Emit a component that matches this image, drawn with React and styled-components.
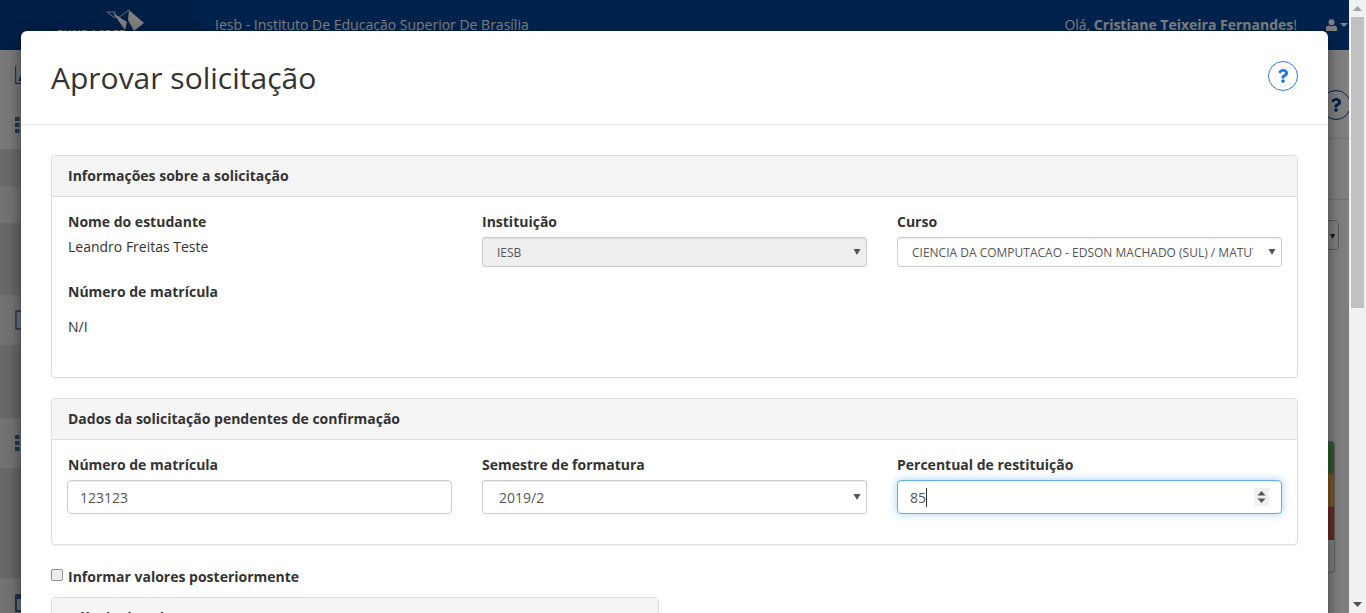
import React from "react"
import styled, { createGlobalStyle } from "styled-components"
import { FaQuestion } from "react-icons/fa"

const GlobalStyle = createGlobalStyle`
    html, body {
        margin: 0;
        height: 613px;
        overflow: hidden;
        background: #fff;
    }
    body, input, select {
        font-family: "Open Sans", "Liberation Sans", sans-serif;
        font-size: 14px;
        color: #333;
    }
    * {
        box-sizing: border-box;
    }
`

const Viewport = styled.div`
    display: flex;
    height: 613px;
    overflow: hidden;
`

const Page = styled.div`
    position: relative;
    flex: 1;
    overflow: hidden;
`

/* the app behind the dialog */
const Navbar = styled.header`
    display: flex;
    align-items: center;
    height: 50px;
    background: #00469c;
    color: #fff;
`

const Brand = styled.div`
    position: relative;
    width: 200px;
    height: 50px;
    background: #003f8c;
`

const BrandName = styled.span`
    position: absolute;
    left: 57px;
    top: 26px;
    font-size: 11px;
    font-weight: 700;
    letter-spacing: 0.3px;
`

const BrandMark = styled.svg`
    position: absolute;
    left: 106px;
    top: 9px;
`

const SiteName = styled.span`
    flex: 1;
    padding-left: 15px;
    padding-bottom: 1px;
`

const Greeting = styled.span`
    margin-right: 29px;
    padding-bottom: 1px;
`

const UserMenu = styled.span`
    display: flex;
    align-items: center;
    gap: 3px;
    width: 23px;
    flex: none;
`

const Shell = styled.div`
    display: flex;
    height: 563px;
`

const Sidebar = styled.nav`
    display: flex;
    flex-direction: column;
    width: 200px;
`

const SideItem = styled.div`
    display: flex;
    align-items: center;
    flex: none;
    height: ${props => props.$height}px;
    padding-left: 15px;
    color: #3a6ea5;
    background: ${props => props.$tone};
`

const Content = styled.main`
    flex: 1;
    display: flex;
    flex-direction: column;
    background: #fff;
`

const TitleBar = styled.div`
    display: flex;
    justify-content: flex-end;
    height: 89px;
    padding-top: 40px;
    border-bottom: 1px solid #e3e3e3;
`

const BackHelp = styled.span`
    display: flex;
    align-items: center;
    justify-content: center;
    width: 30px;
    height: 30px;
    margin-right: -2px;
    border: 1px solid #00469c;
    border-radius: 50%;
    color: #00469c;
`

const FilterBar = styled.div`
    height: 61px;
    border-bottom: 1px solid #e3e3e3;
`

const BackSelect = styled.div`
    align-self: flex-end;
    width: 60px;
    height: 30px;
    margin: 20px 10px 0 0;
    padding-right: 3px;
    border: 1px solid #bbb;
    border-radius: 4px;
    line-height: 28px;
    font-size: 10px;
    text-align: right;
`

const StatusCard = styled.div`
    display: flex;
    flex-direction: column;
    align-self: flex-end;
    flex: none;
    width: 60px;
    height: 132px;
    margin: 191px 14px 0 0;
    border: 1px solid #bbb;
    border-top: 0;
    border-radius: 4px;
    overflow: hidden;
`

const StatusBar = styled.div`
    flex: none;
    height: 33px;
    background: ${props => props.$color};
`

const Dimmer = styled.div`
    position: absolute;
    inset: 0;
    background: rgba(0, 0, 0, 0.5);
`

/* dialog */
const Modal = styled.section`
    position: absolute;
    left: 21px;
    top: 31px;
    width: 1307px;
    height: 640px;
    background: #fff;
    border-radius: 6px;
    box-shadow: 0 5px 15px rgba(0, 0, 0, 0.5);
    overflow: hidden;
`

const ModalHeader = styled.div`
    display: flex;
    align-items: center;
    justify-content: space-between;
    height: 94px;
    padding: 0 30px;
    border-bottom: 1px solid #e5e5e5;
`

const ModalTitle = styled.h1`
    margin: 0;
    font-size: 30px;
    font-weight: 400;
    line-height: 94px;
    color: #333;
`

const HelpButton = styled.span`
    display: flex;
    align-items: center;
    justify-content: center;
    width: 30px;
    height: 30px;
    margin-bottom: 4px;
    border: 1px solid #2b7de9;
    border-radius: 50%;
    color: #1f76e8;
`

const ModalBody = styled.div`
    display: flex;
    flex-direction: column;
    align-items: flex-start;
    padding: 30px 30px 0;
`

const Panel = styled.div`
    width: ${props => props.$width || "100%"};
    margin-bottom: ${props => props.$gap || 0}px;
    border: 1px solid #ddd;
    border-radius: 4px;
    box-shadow: 0 1px 1px rgba(0, 0, 0, 0.05);
`

const PanelHeading = styled.h3`
    margin: 0;
    padding: 0 16px;
    height: 41px;
    line-height: 40px;
    font-size: 14px;
    font-weight: 700;
    color: #333;
    background: #f5f5f5;
    border-bottom: 1px solid #ddd;
    border-radius: 3px 3px 0 0;
`

const PanelBody = styled.div`
    display: grid;
    grid-template-columns: repeat(3, 1fr);
    column-gap: 30px;
    height: ${props => props.$height}px;
    padding: 15px;
`

const Field = styled.div`
    display: flex;
    flex-direction: column;
    min-width: 0;

    &:first-child > label,
    &:first-child > p {
        padding-left: 1px;
    }
`

const Label = styled.label`
    height: 20px;
    line-height: 20px;
    margin-bottom: ${props => props.$gap}px;
    font-weight: 700;
    color: #333;
`

const Value = styled.p`
    margin: 0 0 ${props => props.$gap || 0}px;
    height: 20px;
    line-height: 20px;
    color: #333;
`

const SelectBox = styled.div`
    position: relative;
    height: ${props => props.$small ? 30 : 34}px;
`

const Select = styled.select`
    appearance: none;
    display: block;
    width: 100%;
    height: 100%;
    padding: 0 28px 0 ${props => props.$small ? 14 : 16}px;
    font-size: ${props => props.$small ? 12 : 14}px;
    color: #555;
    background-color: ${props => props.disabled ? "#eee" : "#fff"};
    border: 1px solid #ccc;
    border-radius: 3px;
    box-shadow: inset 0 1px 1px rgba(0, 0, 0, 0.075);
    opacity: 1;
`

const SelectArrow = styled.svg`
    position: absolute;
    right: 6px;
    top: 50%;
    margin-top: -3px;
    pointer-events: none;
`

const NumberBox = styled.div`
    position: relative;
    height: 34px;
`

const Input = styled.input`
    display: block;
    width: 100%;
    height: 34px;
    padding: 6px 12px;
    color: #555;
    background: #fff;
    border: 1px solid #ccc;
    border-radius: 4px;
    box-shadow: inset 0 1px 1px rgba(0, 0, 0, 0.075);
    outline: 0;
    appearance: textfield;

    &::-webkit-inner-spin-button {
        appearance: none;
    }

    &:focus {
        border-color: #66afe9;
        box-shadow: inset 0 1px 1px rgba(0, 0, 0, 0.075), 0 0 8px rgba(102, 175, 233, 0.6);
    }
`

const Spinner = styled.svg`
    position: absolute;
    right: 13px;
    top: 8px;
    background: #f0f0f0;
    pointer-events: none;
`

const Caret = styled.span`
    position: absolute;
    left: 29px;
    top: 8px;
    width: 1px;
    height: 19px;
    background: #333;
    pointer-events: none;
`

const CheckRow = styled.label`
    display: flex;
    align-items: center;
    gap: 5px;
    height: 20px;
    line-height: 20px;
    margin-bottom: 10px;
    font-weight: 700;
    color: #333;
`

const Checkbox = styled.input`
    appearance: none;
    width: 12px;
    height: 12px;
    margin: 0 0 4px;
    background: #ededed;
    border: 1px solid #8f8f8f;
    border-radius: 2px;
`

/* fake scrollbar of the window */
const Scrollbar = styled.div`
    display: flex;
    flex-direction: column;
    align-items: center;
    width: 17px;
    flex: none;
    background: #f1f1f1;
`

const ScrollArrow = styled.svg`
    flex: none;
    margin: ${props => props.$margin};
`

const ScrollThumb = styled.div`
    width: 13px;
    height: 291px;
    margin-bottom: auto;
    background: #c1c1c1;
`

const GridIcon = () => (
    <svg width="16" height="16" viewBox="0 0 16 16" fill="currentColor">
        {[0, 6, 12].map(y => [0, 6, 12].map(x => (
            <rect key={`${x}-${y}`} x={x} y={y} width="4.5" height="4" />
        )))}
    </svg>
)

const ChartIcon = () => (
    <svg width="18" height="18" viewBox="0 0 18 18" fill="currentColor">
        <path d="M0 0h1.3v16.7H18V18H0z" />
        <path d="M3 15l3-6 3 2 5-7v11z" />
    </svg>
)

const BoxIcon = () => (
    <svg width="16" height="20" viewBox="0 0 16 20" fill="none" stroke="currentColor" strokeWidth="1.5">
        <rect x="1" y="1" width="14" height="18" />
    </svg>
)

const CalendarIcon = () => (
    <svg width="16" height="18" viewBox="0 0 16 18" fill="currentColor">
        <path d="M1 0h14a1 1 0 0 1 1 1v16a1 1 0 0 1-1 1H1a1 1 0 0 1-1-1V1a1 1 0 0 1 1-1zm1 5v11h12V5z" />
    </svg>
)

const UserIcon = () => (
    <svg width="11" height="12" viewBox="0 0 11 12" fill="currentColor">
        <circle cx="5.5" cy="3.2" r="3" />
        <path d="M0 12V9.2C0 7.4 1.4 6.4 3 6.4c.7.6 1.5.9 2.5.9s1.8-.3 2.5-.9c1.6 0 3 1 3 2.8V12z" />
    </svg>
)

const Arrow = () => (
    <SelectArrow width="8" height="6" viewBox="0 0 8 6" fill="#555">
        <path d="M.5 0h7L4 6z" />
    </SelectArrow>
)

const sideItems = [
    { height: 50, tone: "#f2f2f2", icon: <ChartIcon /> },
    { height: 49, tone: "#f2f2f2", icon: <GridIcon /> },
    { height: 37, tone: "#d4d4d4" },
    { height: 37, tone: "#e6e6e6" },
    { height: 72, tone: "#d0d0d0" },
    { height: 50, tone: "#e6e6e6", icon: <BoxIcon /> },
    { height: 73, tone: "#d0d0d0" },
    { height: 50, tone: "#e6e6e6", icon: <GridIcon /> },
    { height: 110, tone: "#d0d0d0" },
    { height: 50, tone: "#e6e6e6", icon: <CalendarIcon /> },
]

export default function App() {
    return (
        <Viewport>
            <GlobalStyle />
            <Page>
                <Navbar>
                    <Brand>
                        <BrandMark width="40" height="24" viewBox="0 0 40 24">
                            <path d="M1 3h8v6zM12 9l11-8" fill="none" stroke="#fff" strokeWidth="0.8" />
                            <path d="M7 4l14 9-2 8z" fill="#fff" />
                            <path d="M23 1l15 13-10 8-6-11z" fill="#fff" />
                        </BrandMark>
                        <BrandName>FUNDACRED</BrandName>
                    </Brand>
                    <SiteName>Iesb - Instituto De Educação Superior De Brasília</SiteName>
                    <Greeting>Olá, <b>Cristiane Teixeira Fernandes</b>!</Greeting>
                    <UserMenu>
                        <UserIcon />
                        <svg width="8" height="4" viewBox="0 0 8 4" fill="#fff"><path d="M0 0h8L4 4z" /></svg>
                    </UserMenu>
                </Navbar>
                <Shell>
                    <Sidebar>
                        {sideItems.map((item, i) => (
                            <SideItem key={i} $height={item.height} $tone={item.tone}>{item.icon}</SideItem>
                        ))}
                    </Sidebar>
                    <Content>
                        <TitleBar><BackHelp><FaQuestion size={14} /></BackHelp></TitleBar>
                        <FilterBar />
                        <BackSelect>▾</BackSelect>
                        <StatusCard>
                            <StatusBar $color="#5cb85c" />
                            <StatusBar $color="#f0ad4e" />
                            <StatusBar $color="#d9534f" />
                        </StatusCard>
                    </Content>
                </Shell>
                <Dimmer />
                <Modal>
                    <ModalHeader>
                        <ModalTitle>Aprovar solicitação</ModalTitle>
                        <HelpButton><FaQuestion size={14} /></HelpButton>
                    </ModalHeader>
                    <ModalBody>
                        <Panel $gap={20}>
                            <PanelHeading>Informações sobre a solicitação</PanelHeading>
                            <PanelBody $height={180}>
                                <Field>
                                    <Label $gap={5}>Nome do estudante</Label>
                                    <Value $gap={25}>Leandro Freitas Teste</Value>
                                    <Label $gap={15}>Número de matrícula</Label>
                                    <Value>N/I</Value>
                                </Field>
                                <Field>
                                    <Label $gap={5}>Instituição</Label>
                                    <SelectBox $small>
                                        <Select $small disabled defaultValue="IESB">
                                            <option>IESB</option>
                                        </Select>
                                        <Arrow />
                                    </SelectBox>
                                </Field>
                                <Field>
                                    <Label $gap={5}>Curso</Label>
                                    <SelectBox $small>
                                        <Select $small defaultValue="cc">
                                            <option value="cc">CIENCIA DA COMPUTACAO - EDSON MACHADO (SUL) / MATUTINO</option>
                                        </Select>
                                        <Arrow />
                                    </SelectBox>
                                </Field>
                            </PanelBody>
                        </Panel>
                        <Panel $gap={22}>
                            <PanelHeading>Dados da solicitação pendentes de confirmação</PanelHeading>
                            <PanelBody $height={104}>
                                <Field>
                                    <Label $gap={5}>Número de matrícula</Label>
                                    <Input type="text" defaultValue="123123" />
                                </Field>
                                <Field>
                                    <Label $gap={5}>Semestre de formatura</Label>
                                    <SelectBox>
                                        <Select defaultValue="2019/2">
                                            <option>2019/2</option>
                                        </Select>
                                        <Arrow />
                                    </SelectBox>
                                </Field>
                                <Field>
                                    <Label $gap={5}>Percentual de restituição</Label>
                                    <NumberBox>
                                        <Input type="number" defaultValue="85" autoFocus />
                                        <Caret />
                                        <Spinner width="15" height="18" viewBox="0 0 15 18" fill="#555">
                                            <path d="M3.5 7.5L7.5 3l4 4.5z" />
                                            <path d="M3.5 10.5l4 4.5 4-4.5z" />
                                        </Spinner>
                                    </NumberBox>
                                </Field>
                            </PanelBody>
                        </Panel>
                        <CheckRow>
                            <Checkbox type="checkbox" />
                            Informar valores posteriormente
                        </CheckRow>
                        <Panel $width="608px">
                            <PanelHeading>Cálculo de valores</PanelHeading>
                        </Panel>
                    </ModalBody>
                </Modal>
            </Page>
            <Scrollbar>
                <ScrollArrow $margin="6px 0" width="9" height="5" viewBox="0 0 9 5" fill="#a3a3a3"><path d="M0 5h9L4.5 0z" /></ScrollArrow>
                <ScrollThumb />
                <ScrollArrow $margin="0 0 6px" width="9" height="5" viewBox="0 0 9 5" fill="#505050"><path d="M0 0h9L4.5 5z" /></ScrollArrow>
            </Scrollbar>
        </Viewport>
    )
}
